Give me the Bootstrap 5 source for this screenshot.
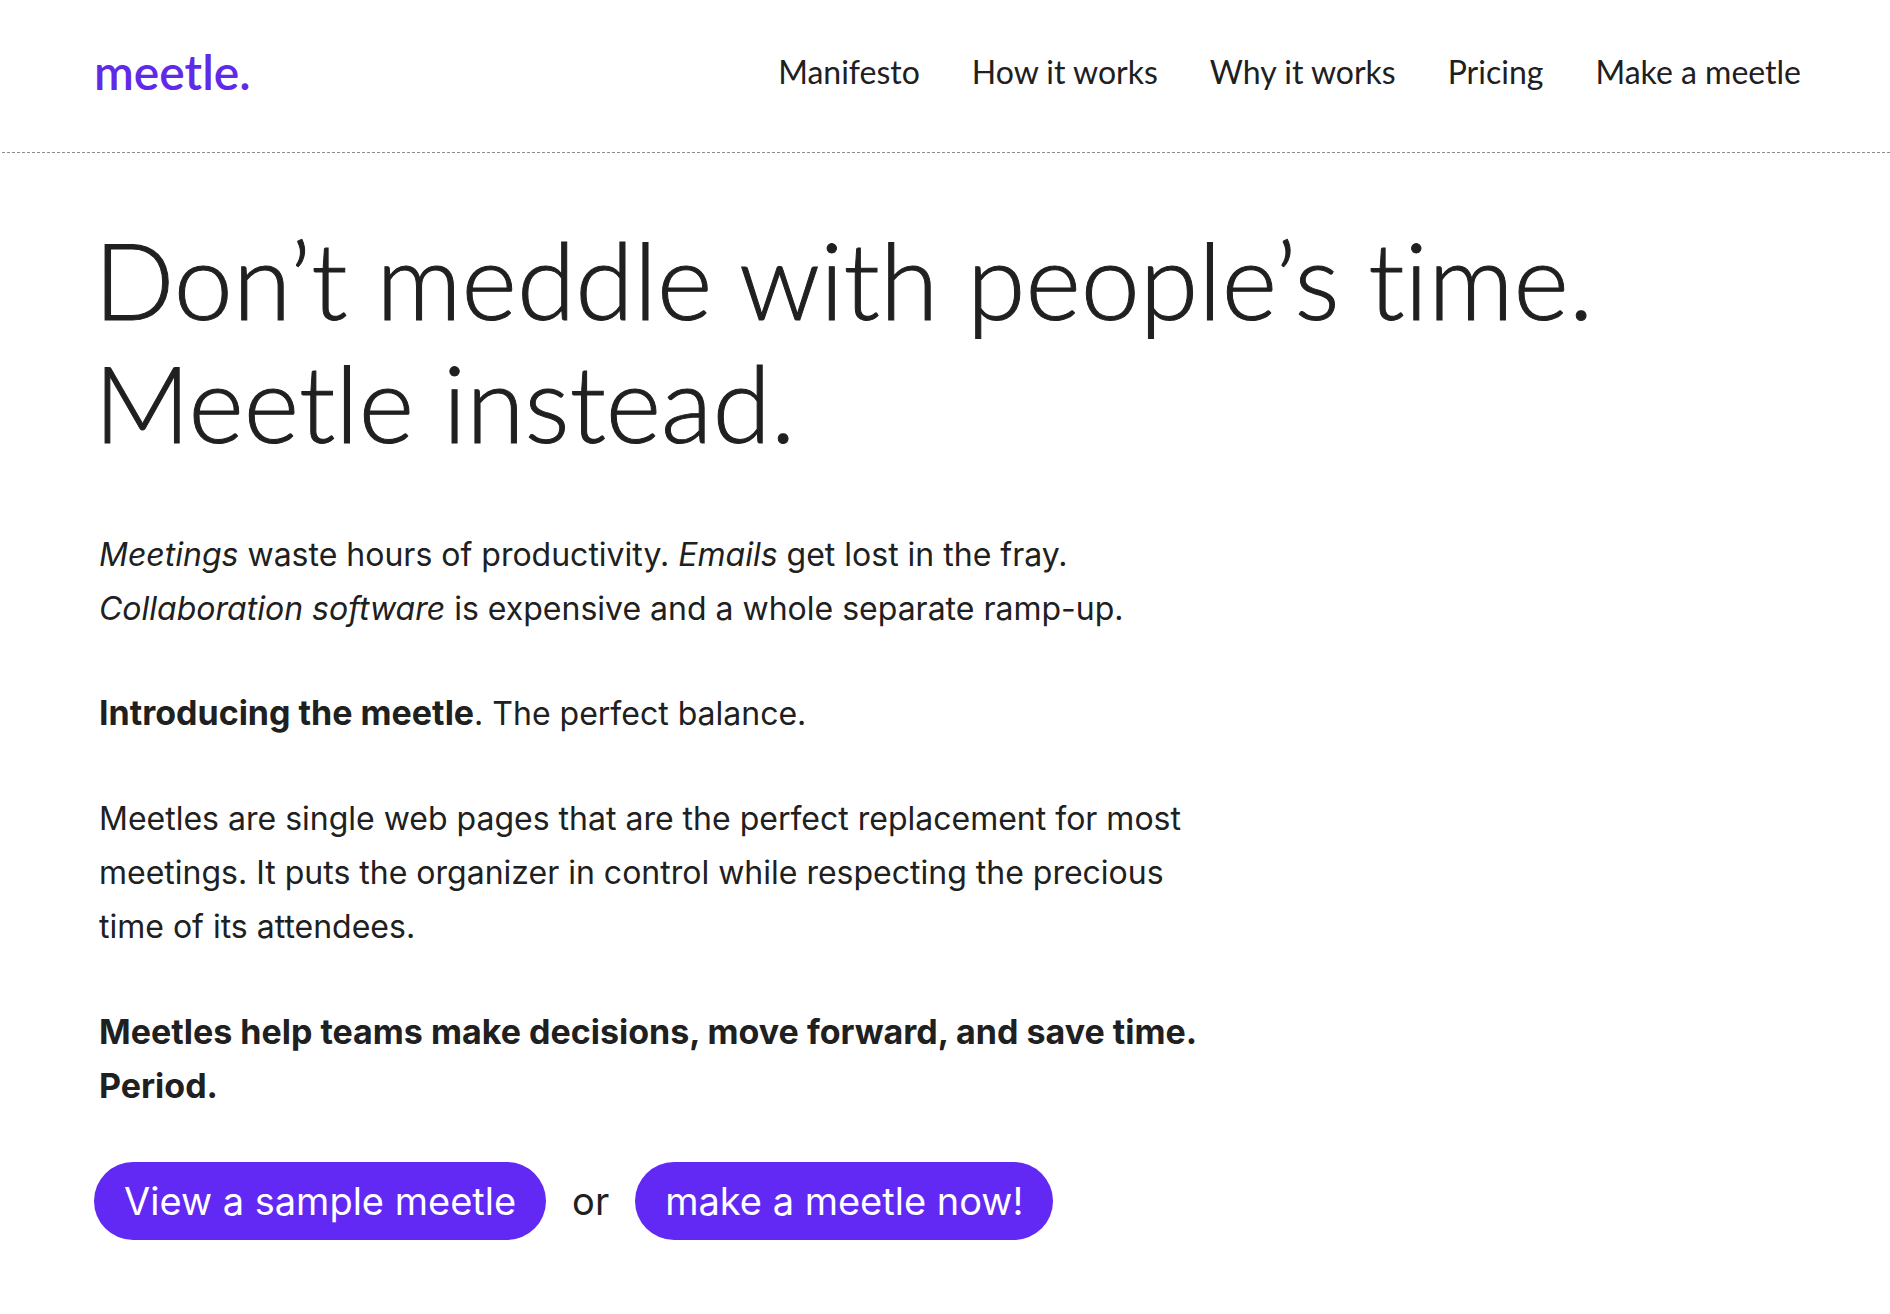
<!DOCTYPE html>
<html lang="en">
<head>
<meta charset="utf-8">
<meta name="viewport" content="width=device-width, initial-scale=1">
<title>meetle.</title>
<link href="https://cdn.jsdelivr.net/npm/bootstrap@5.3.0/dist/css/bootstrap.min.css" rel="stylesheet">
<style>
  :root { --ink: #202020; --violet: #6229f5; }
  body { color: var(--ink); font-family: Inter, "Liberation Sans", sans-serif; background: #fff; }
  .site-header { padding: 44px 89px 52px 94px; }
  .site-header .navbar-brand { font: 600 48px/56px Lato, sans-serif; color: #612ae8; }
  .site-header .nav-link { font: 400 32px/40px Lato, sans-serif; color: var(--ink); white-space: nowrap; }
  .site-nav { gap: 52px; }
  /* fine dashed rule: 3px dash, 2px gap */
  .dash-rule { height: 1px; background: repeating-linear-gradient(90deg, transparent 0 2px, #8c8c8c 2px 5px); }
  .hero { padding: 65px 94px 72px; }
  .headline { font: 300 106px/123px Lato, sans-serif; font-variant-ligatures: none; -webkit-text-stroke: 1px currentColor; margin-bottom: 64px; }
  .copy { max-width: 1130px; padding-left: 5px; font-size: 32px; line-height: 54px; }
  .copy p { margin-bottom: 51px; }
  .copy p:last-child { margin-bottom: 49px; }
  .copy strong { font-size: 34px; line-height: 1; font-weight: 700; }
  .copy .closing { font-size: 34px; }
  .actions { gap: 26px; font-size: 38px; line-height: 54px; }
  .pill { --bs-btn-color: #fff; --bs-btn-bg: var(--violet); --bs-btn-hover-color: #fff; --bs-btn-hover-bg: #5420dc; font-size: 38px; line-height: 54px; padding: 12px 30px; border: 0; }
</style>
</head>
<body>
<header>
  <div class="site-header navbar navbar-expand justify-content-between">
    <a class="navbar-brand p-0 m-0" href="#">meetle.</a>
    <nav class="navbar-nav site-nav" aria-label="Main">
      <a class="nav-link p-0" href="#manifesto">Manifesto</a>
      <a class="nav-link p-0" href="#how">How it works</a>
      <a class="nav-link p-0" href="#why">Why it works</a>
      <a class="nav-link p-0" href="#pricing">Pricing</a>
      <a class="nav-link p-0" href="#make">Make a meetle</a>
    </nav>
  </div>
  <div class="dash-rule"></div>
</header>
<main class="hero">
  <h1 class="headline">Don’t meddle with people’s time.<br>Meetle instead.</h1>
  <div class="copy">
    <p><em>Meetings</em> waste hours of productivity. <em>Emails</em> get lost in the fray.<br><em>Collaboration software</em> is expensive and a whole separate ramp-up.</p>
    <p><strong>Introducing the meetle</strong>. The perfect balance.</p>
    <p>Meetles are single web pages that are the perfect replacement for most<br>meetings. It puts the organizer in control while respecting the precious<br>time of its attendees.</p>
    <p class="closing"><strong>Meetles help teams make decisions, move forward, and save time.<br>Period.</strong></p>
  </div>
  <div class="actions d-flex flex-wrap align-items-center">
    <button type="button" class="btn pill rounded-pill">View a sample meetle</button>
    <span>or</span>
    <button type="button" class="btn pill rounded-pill">make a meetle now!</button>
  </div>
</main>
<script src="https://cdn.jsdelivr.net/npm/bootstrap@5.3.0/dist/js/bootstrap.bundle.min.js"></script>
</body>
</html>
